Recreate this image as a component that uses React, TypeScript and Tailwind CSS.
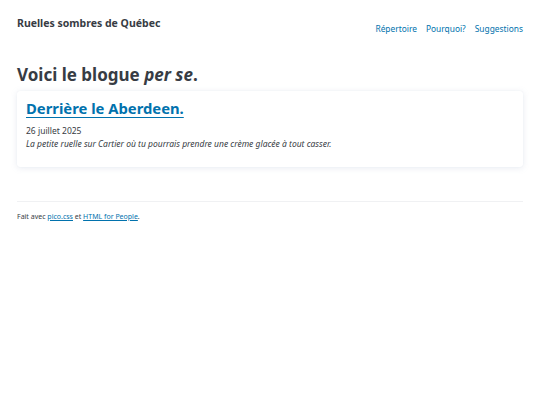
import React from 'react';

const font = { fontFamily: '"Noto Sans", "Open Sans", sans-serif' };

export default function App() {
    return (
        <div className="min-h-[405px] bg-white text-[#373c44] px-[17px]" style={font}>
            <header className="flex items-start justify-between pt-[16px]">
                <a className="text-[10.5px] font-bold leading-[15px] text-[#373c44]">Ruelles sombres de Québec</a>
                <nav className="flex gap-[9px] pt-[6px] text-[8.4px] leading-[13px] text-[#0172ad]">
                    <a>Répertoire</a>
                    <a>Pourquoi?</a>
                    <a>Suggestions</a>
                </nav>
            </header>

            <main className="mt-[28px]">
                <h1 className="text-[17px] font-bold leading-[24px]">
                    Voici le blogue <em>per se</em>.
                </h1>

                <article className="mt-[4px] bg-white rounded-[3px] px-[9px] pt-[5px] pb-[17px] shadow-[0_1px_6px_rgba(129,145,181,0.18),0_0_1px_rgba(129,145,181,0.15)]">
                    <h2 className="text-[14.8px] font-bold leading-[24px]">
                        <a className="text-[#0172ad] underline underline-offset-[3px] decoration-[1px]">Derrière le Aberdeen.</a>
                    </h2>
                    <p className="mt-[5px] text-[8.5px] leading-[12px]">26 juillet 2025</p>
                    <p className="text-[8.5px] leading-[13px] italic">
                        La petite ruelle sur Cartier où tu pourrais prendre une crème glacée à tout casser.
                    </p>
                </article>
            </main>

            <footer className="mt-[34px] border-t border-[#f0f1f3] pt-[10px]">
                <p className="text-[7px] leading-[10px]">
                    Fait avec <a className="text-[#0172ad] underline">pico.css</a> et{' '}
                    <a className="text-[#0172ad] underline">HTML for People</a>.
                </p>
            </footer>
        </div>
    );
}
